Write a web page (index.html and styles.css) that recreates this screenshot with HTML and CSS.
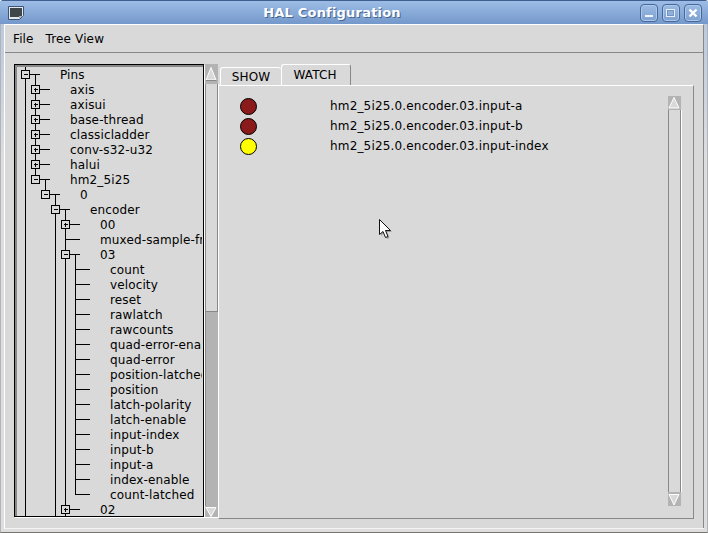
FILE: index.html
```html
<!DOCTYPE html>
<html lang="en">
<head>
<meta charset="utf-8">
<title>HAL Configuration</title>
<link rel="stylesheet" href="styles.css">
</head>
<body>
<div class="window">
  <header class="titlebar">
    <svg class="app-icon" width="16" height="14" viewBox="0 0 16 14"><path d="M0.500 0.500H15.500V9.500L11.500 13.500H0.500z" fill="#e4e8ee" stroke="#3c5478"/><rect x="2" y="2" width="12" height="9" fill="#40474a"/><path d="M11 13V10H15z" fill="#a8adb2"/></svg>
    <span class="title">HAL Configuration</span>
    <div class="win-buttons">
      <span class="win-btn"><svg width="10" height="10" viewBox="0 0 10 10"><rect x="1" y="7" width="8" height="2" fill="#f2f6fb"/></svg></span>
      <span class="win-btn"><svg width="10" height="10" viewBox="0 0 10 10"><rect x="0.500" y="1.500" width="8" height="7" fill="#6f94c6" stroke="#e6eef8" stroke-width="1"/><rect x="2" y="3" width="5" height="4" fill="#8fb0da"/></svg></span>
      <span class="win-btn"><svg width="10" height="10" viewBox="0 0 10 10"><path d="M1.500 1.500l7 7M8.500 1.500l-7 7" stroke="#fff" stroke-width="2.400"/></svg></span>
    </div>
  </header>
  <div class="content">
    <nav class="menubar"><span>File</span><span>Tree View</span></nav>
    <main class="main">
      <div class="tree-panel">
        <div class="tree">
          <svg class="tree-lines" width="188" height="451" viewBox="15 65 188 451" shape-rendering="crispEdges">
            <defs>
              <g id="minus"><rect x="-4" y="-4" width="8" height="8" fill="#d9d9d9" stroke="#000"/><path d="M-2 0h4" stroke="#000"/></g>
              <g id="plus"><rect x="-4" y="-4" width="8" height="8" fill="#d9d9d9" stroke="#000"/><path d="M-2 0h4M0 -2v4" stroke="#000"/></g>
            </defs>
            <path fill="none" stroke="#000" d="M25.500 65V516M25.500 74.500H40M35.500 74.500V179.500M35.500 89.500H50M35.500 104.500H50M35.500 119.500H50M35.500 134.500H50M35.500 149.500H50M35.500 164.500H50M35.500 179.500H50M45.500 179.500V194.500M45.500 194.500H60M55.500 194.500V516M55.500 209.500H70M65.500 209.500V516M65.500 224.500H80M65.500 239.500H80M65.500 254.500H80M65.500 509.500H80M75.500 254.500V494.500M75.500 269.500H90M75.500 284.500H90M75.500 299.500H90M75.500 314.500H90M75.500 329.500H90M75.500 344.500H90M75.500 359.500H90M75.500 374.500H90M75.500 389.500H90M75.500 404.500H90M75.500 419.500H90M75.500 434.500H90M75.500 449.500H90M75.500 464.500H90M75.500 479.500H90M75.500 494.500H90"/>
            <use href="#minus" x="25.500" y="74.500"/>
            <use href="#plus" x="35.500" y="89.500"/><use href="#plus" x="35.500" y="104.500"/><use href="#plus" x="35.500" y="119.500"/><use href="#plus" x="35.500" y="134.500"/><use href="#plus" x="35.500" y="149.500"/><use href="#plus" x="35.500" y="164.500"/>
            <use href="#minus" x="35.500" y="179.500"/><use href="#minus" x="45.500" y="194.500"/><use href="#minus" x="55.500" y="209.500"/>
            <use href="#plus" x="65.500" y="224.500"/><use href="#minus" x="65.500" y="254.500"/><use href="#plus" x="65.500" y="509.500"/>
          </svg>
          <ul class="rows">
            <li class="d0">Pins</li>
            <li class="d1">axis</li><li class="d1">axisui</li><li class="d1">base-thread</li><li class="d1">classicladder</li><li class="d1">conv-s32-u32</li><li class="d1">halui</li><li class="d1">hm2_5i25</li>
            <li class="d2">0</li>
            <li class="d3">encoder</li>
            <li class="d4">00</li><li class="d4">muxed-sample-frequency</li><li class="d4">03</li>
            <li class="d5">count</li><li class="d5">velocity</li><li class="d5">reset</li><li class="d5">rawlatch</li><li class="d5">rawcounts</li><li class="d5">quad-error-enable</li><li class="d5">quad-error</li><li class="d5">position-latched</li><li class="d5">position</li><li class="d5">latch-polarity</li><li class="d5">latch-enable</li><li class="d5">input-index</li><li class="d5">input-b</li><li class="d5">input-a</li><li class="d5">index-enable</li><li class="d5">count-latched</li>
            <li class="d4">02</li>
          </ul>
        </div>
        <div class="scrollbar tree-scroll">
          <span class="arrow arrow-up"><svg width="12" height="20" viewBox="0 0 12 20"><path d="M6 3.500L11 16H1z" fill="#d9d9d9" stroke="#fff"/><path d="M1 16.500h10.500" stroke="#888"/></svg></span>
          <span class="thumb"></span>
          <span class="trough"></span>
          <span class="arrow arrow-down"><svg width="12" height="11" viewBox="0 0 12 11"><path d="M1 1.500h10L6 10.500z" fill="#d9d9d9" stroke="#fff"/></svg></span>
        </div>
      </div>
      <section class="notebook">
        <div class="tabs"><span class="tab">SHOW</span><span class="tab tab-active">WATCH</span></div>
        <div class="pane">
          <div class="watch">
            <div class="watch-row"><span class="led led-off"></span><span>hm2_5i25.0.encoder.03.input-a</span></div>
            <div class="watch-row"><span class="led led-off"></span><span>hm2_5i25.0.encoder.03.input-b</span></div>
            <div class="watch-row"><span class="led led-on"></span><span>hm2_5i25.0.encoder.03.input-index</span></div>
          </div>
          <div class="scrollbar watch-scroll">
            <span class="arrow arrow-up-small"><svg width="12" height="14" viewBox="0 0 12 14"><path d="M6 1.500L11 12H1z" fill="#d9d9d9" stroke="#fff"/></svg></span>
            <span class="thumb"></span>
            <span class="arrow arrow-down-small"><svg width="12" height="14" viewBox="0 0 12 14"><path d="M1 2.500h10L6 13z" fill="#d9d9d9" stroke="#fff"/></svg></span>
          </div>
          <svg class="cursor" width="15" height="23" viewBox="0 0 15 23"><path d="M3 3V18L6.500 15L9 21L11.500 20L9 14H14z" fill="#000" opacity="0.25"/><path d="M1.500 1.500V16.500L5 13.500L7.500 19.500L10 18.500L7.500 12.500H12.500z" fill="#fff" stroke="#111"/></svg>
        </div>
      </section>
    </main>
  </div>
</div>
</body>
</html>
```
FILE: styles.css
```css
* { box-sizing: border-box; }
html, body { margin: 0; padding: 0; }
body { width: 708px; height: 533px; overflow: hidden; font: 12px/15px "DejaVu Sans", sans-serif; letter-spacing: 0.13px; color: #000; }
.window { width: 708px; height: 533px; display: flex; flex-direction: column; background: linear-gradient(#b4c6de, #dedede 30%); border: 1px solid #b0b4ba; border-top-color: #3f5f90; border-bottom-color: #77736e; border-radius: 3px 3px 0 0; }
.titlebar { height: 23px; flex: none; display: flex; align-items: center; position: relative; margin: 0 -1px; padding: 0 6px 0 8px; background: linear-gradient(#9dbde6, #7498cb); }
.app-icon { flex: none; }
.title { position: absolute; left: 0; right: 44px; text-align: center; font-size: 13px; font-weight: bold; color: #fff; letter-spacing: 0.2px; text-shadow: 1px 1px 0 #46658f; }
.win-buttons { margin-left: auto; display: flex; gap: 4px; position: relative; }
.win-btn { width: 18px; height: 18px; display: flex; align-items: center; justify-content: center; border: 1px solid #46689a; border-radius: 4px; background: linear-gradient(#9cbbe3, #7da0d0); box-shadow: inset 0 0 0 1px #adc8ea; }
.content { flex: 1; margin: 0 3px 3px; background: #d9d9d9; border-left: 1px solid #fff; border-bottom: 1px solid #f4f4f4; display: flex; flex-direction: column; min-height: 0; }
.menubar { height: 29px; flex: none; display: flex; gap: 12px; align-items: center; padding: 2px 0 0 8px; border-top: 1px solid #fff; border-bottom: 1px solid #888; border-right: 1px solid #888; }
.main { flex: 1; display: flex; padding: 11px 0 0 9px; min-height: 0; border-right: 1px solid #888; }
.tree-panel { display: flex; gap: 1px; height: 454px; flex: none; }
.tree { width: 190px; height: 453px; position: relative; overflow: hidden; border: 1px solid #000; box-shadow: 1px 1px 0 #fff; }
.tree::before { content: ""; position: absolute; inset: 0; border-top: 2px solid #888; border-left: 2px solid #888; z-index: 2; pointer-events: none; }
.tree-lines { position: absolute; left: 0; top: 0; }
.rows { list-style: none; margin: 0; padding: 3px 0 0; width: 187px; overflow: hidden; position: relative; white-space: nowrap; }
.rows li { height: 15px; }
.d0 { padding-left: 45px; }
.d1 { padding-left: 55px; }
.d2 { padding-left: 65px; }
.d3 { padding-left: 75px; }
.d4 { padding-left: 85px; }
.d5 { padding-left: 95px; }
.scrollbar { display: flex; flex-direction: column; width: 13px; flex: none; }
.tree-scroll { height: 454px; }
.arrow { display: block; flex: none; background: #b3b3b3; }
.arrow svg { display: block; }
.arrow-up { height: 20px; }
.arrow-down { height: 12px; border-bottom: 1px solid #fff; box-shadow: 1px 0 0 #fff; }
.thumb { display: block; flex: 1; border-left: 1px solid #888; border-right: 1px solid #888; box-shadow: 1px 0 0 #fff; }
.tree-scroll .thumb { flex: none; height: 228px; border-bottom: 1px solid #888; }
.trough { display: block; flex: 1; background: #b3b3b3; border-left: 1px solid #888; box-shadow: 1px 0 0 #fff; }
.notebook { width: 476px; flex: none; display: flex; flex-direction: column; height: 455px; }
.tabs { height: 21px; flex: none; display: flex; align-items: flex-end; padding-left: 2px; }
.tab { width: 61px; height: 18px; padding-top: 2px; display: flex; align-items: center; justify-content: center; border: 1px solid #fff; border-bottom: 0; border-right: 0; border-radius: 3px 3px 0 0; }
.tab-active { width: 70px; height: 21px; border-right: 1px solid #888; padding: 0 2px 0 0; }
.pane { flex: 1; position: relative; display: flex; justify-content: space-between; padding: 10px 12px 12px 0; border-top: 1px solid #fff; border-left: 1px solid #fff; border-right: 1px solid #888; border-bottom: 1px solid #888; }
.watch { padding-left: 21px; letter-spacing: 0.17px; }
.watch-row { height: 20px; display: flex; align-items: center; gap: 73px; }
.led { width: 17px; height: 17px; border-radius: 50%; border: 1px solid #000; flex: none; }
.led-off { background: #8b1a1a; }
.led-on { background: #ff0; }
.arrow-up-small, .arrow-down-small { height: 14px; }
.cursor { position: absolute; left: 159px; top: 132px; }
```
